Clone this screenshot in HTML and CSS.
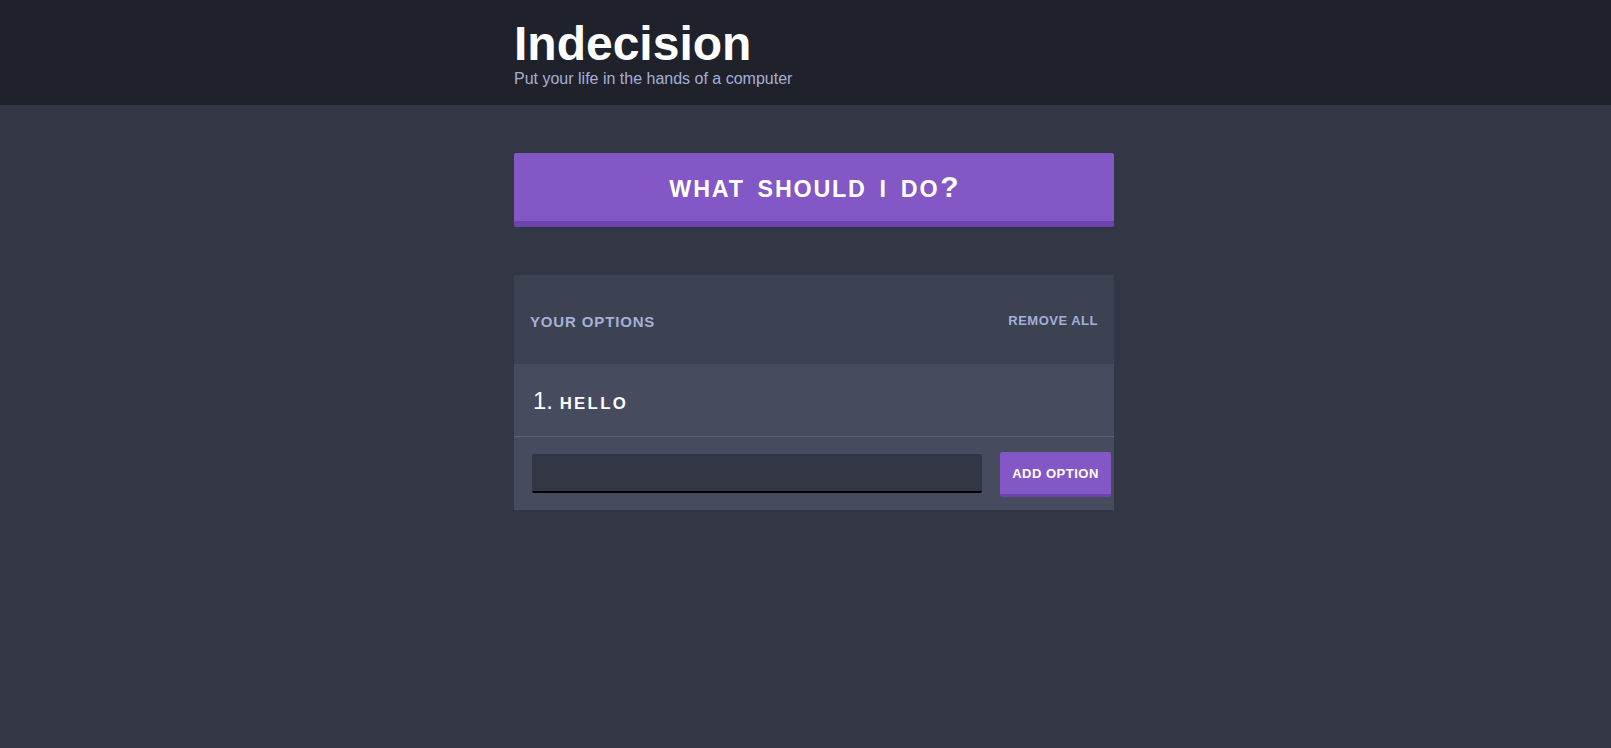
FILE: index.html
```html
<!DOCTYPE html>
<html lang="en">
<head>
<meta charset="utf-8">
<title>Indecision</title>
<link rel="stylesheet" href="styles.css">
</head>
<body>
<header class="header">
  <div class="container">
    <h1 class="header__title">Indecision</h1>
    <h2 class="header__subtitle">Put your life in the hands of a computer</h2>
  </div>
</header>
<main class="container main">
  <button class="big-button"><span class="big-button__caps">What should I do</span><span class="big-button__q">?</span></button>
  <div class="widget">
    <div class="widget-header">
      <h3 class="widget-header__title">Your Options</h3>
      <button class="button-link">Remove All</button>
    </div>
    <div class="option">
      <p class="option__text"><span class="option__num">1.</span> <span class="option__caps">Hello</span></p>
    </div>
    <form class="add-option">
      <input class="add-option__input" type="text" name="option">
      <button class="button" type="button">Add Option</button>
    </form>
  </div>
</main>
</body>
</html>
```
FILE: styles.css
```css
html, body {
  margin: 0;
  padding: 0;
}

body {
  background: #333745;
  font-family: "Liberation Sans", Arial, Helvetica, sans-serif;
  color: #ffffff;
}

.container {
  width: 617px;
  box-sizing: border-box;
  padding-left: 17px;
  margin: 0 auto;
}

.header {
  background: #20222b;
  padding: 20px 0 17px;
}

.header__title {
  margin: 0;
  font-size: 48px;
  line-height: 48px;
  font-weight: bold;
  color: #ffffff;
}

.header__subtitle {
  margin: 2px 0 0;
  font-size: 16px;
  line-height: 18px;
  font-weight: normal;
  color: #a5afd7;
}

.main {
  padding-top: 48px;
}

.big-button {
  display: block;
  width: 100%;
  height: 74px;
  box-sizing: border-box;
  margin: 0 0 48px;
  padding: 0;
  background: #8357c5;
  border: none;
  border-bottom: 6px solid #6b45ab;
  border-radius: 2px;
  color: #ffffff;
  font-family: inherit;
  font-weight: bold;
  font-size: 30px;
  line-height: 1;
  cursor: pointer;
}

.big-button__caps {
  font-size: 23.3px;
  text-transform: uppercase;
  letter-spacing: 1.8px;
  word-spacing: 4.6px;
}

.big-button__q {
  margin-left: 1px;
}

.widget {
  background: #464b5e;
  margin-bottom: 48px;
}

.widget-header {
  display: flex;
  justify-content: space-between;
  align-items: center;
  height: 89px;
  box-sizing: border-box;
  padding: 3px 16px 0;
  background: #3c4251;
}

.widget-header__title {
  margin: 0;
  font-size: 15px;
  font-weight: bold;
  letter-spacing: 0.85px;
  text-transform: uppercase;
  color: #a5afd7;
}

.button-link {
  margin: 0 0 1px;
  padding: 0;
  background: none;
  border: none;
  font-family: inherit;
  font-size: 13px;
  font-weight: bold;
  letter-spacing: 0.5px;
  text-transform: uppercase;
  color: #a5afd7;
  cursor: pointer;
}

.option {
  padding: 23px 17px 21px 19px;
  border-bottom: 1px solid #5c627b;
}

.option__text {
  margin: 0;
  line-height: 28px;
  font-size: 24px;
  color: #ffffff;
}

.option__caps {
  font-size: 16.8px;
  line-height: 1;
  font-weight: bold;
  letter-spacing: 2.3px;
  text-transform: uppercase;
}

.add-option {
  display: flex;
  align-items: flex-start;
  padding: 15px 3px 13px 18px;
}

.add-option__input {
  flex: 1;
  min-width: 0;
  height: 39px;
  box-sizing: border-box;
  margin: 2px 18px 0 0;
  padding: 8px;
  background: #333745;
  border: none;
  border-bottom: 2px solid #000000;
  border-radius: 2px;
  color: #a5afd7;
  font-family: inherit;
  font-size: 14px;
  outline: none;
}

.button {
  width: 111px;
  height: 45px;
  box-sizing: border-box;
  padding: 0;
  background: #8357c5;
  border: none;
  border-bottom: 3px solid #6b45ab;
  border-radius: 2px;
  color: #ffffff;
  font-family: inherit;
  font-size: 13px;
  font-weight: bold;
  letter-spacing: 0.5px;
  text-transform: uppercase;
  cursor: pointer;
}
```
